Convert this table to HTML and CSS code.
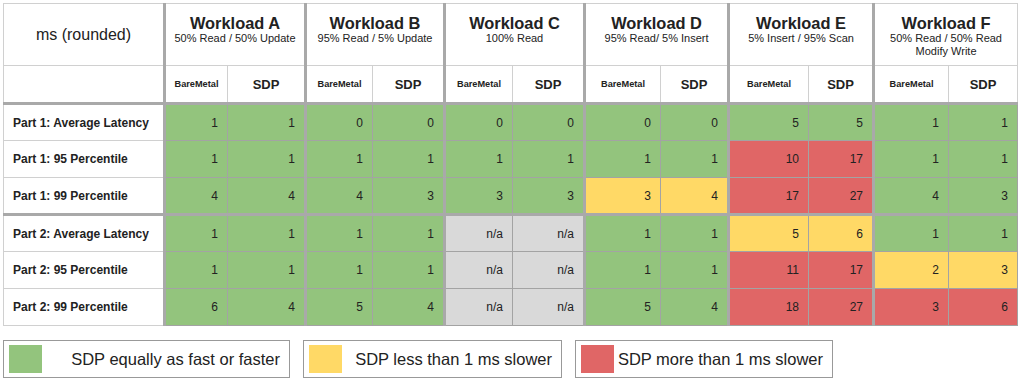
FILE: index.html
```html
<!DOCTYPE html>
<html>
<head>
<meta charset="utf-8">
<link rel="stylesheet" href="styles.css">
</head>
<body>
<div class="page">
<table class="grid">
  <colgroup>
    <col class="c0">
    <col class="a1"><col class="a2">
    <col class="b1"><col class="b2">
    <col class="c1"><col class="c2">
    <col class="d1"><col class="d2">
    <col class="e1"><col class="e2">
    <col class="f1"><col class="f2">
  </colgroup>
  <thead>
    <tr class="h1">
      <th class="corner">ms (rounded)</th>
      <th colspan="2" class="wl"><div class="title">Workload A</div><div class="sub">50% Read / 50% Update</div></th>
      <th colspan="2" class="wl"><div class="title">Workload B</div><div class="sub">95% Read / 5% Update</div></th>
      <th colspan="2" class="wl"><div class="title">Workload C</div><div class="sub">100% Read</div></th>
      <th colspan="2" class="wl"><div class="title">Workload D</div><div class="sub">95% Read/ 5% Insert</div></th>
      <th colspan="2" class="wl"><div class="title">Workload E</div><div class="sub">5% Insert / 95% Scan</div></th>
      <th colspan="2" class="wl"><div class="title">Workload F</div><div class="sub">50% Read / 50% Read<br>Modify Write</div></th>
    </tr>
    <tr class="h2">
      <th class="blank"></th>
      <th class="bm wl">BareMetal</th><th class="sdp">SDP</th>
      <th class="bm wl">BareMetal</th><th class="sdp">SDP</th>
      <th class="bm wl">BareMetal</th><th class="sdp">SDP</th>
      <th class="bm wl">BareMetal</th><th class="sdp">SDP</th>
      <th class="bm wl">BareMetal</th><th class="sdp">SDP</th>
      <th class="bm wl">BareMetal</th><th class="sdp">SDP</th>
    </tr>
  </thead>
  <tbody class="part">
    <tr>
      <th class="label">Part 1: Average Latency</th>
      <td class="g wl">1</td><td class="g">1</td>
      <td class="g wl">0</td><td class="g">0</td>
      <td class="g wl">0</td><td class="g">0</td>
      <td class="g wl">0</td><td class="g">0</td>
      <td class="g wl">5</td><td class="g">5</td>
      <td class="g wl">1</td><td class="g">1</td>
    </tr>
    <tr>
      <th class="label">Part 1: 95 Percentile</th>
      <td class="g wl">1</td><td class="g">1</td>
      <td class="g wl">1</td><td class="g">1</td>
      <td class="g wl">1</td><td class="g">1</td>
      <td class="g wl">1</td><td class="g">1</td>
      <td class="r wl">10</td><td class="r">17</td>
      <td class="g wl">1</td><td class="g">1</td>
    </tr>
    <tr>
      <th class="label">Part 1: 99 Percentile</th>
      <td class="g wl">4</td><td class="g">4</td>
      <td class="g wl">4</td><td class="g">3</td>
      <td class="g wl">3</td><td class="g">3</td>
      <td class="y wl">3</td><td class="y">4</td>
      <td class="r wl">17</td><td class="r">27</td>
      <td class="g wl">4</td><td class="g">3</td>
    </tr>
  </tbody>
  <tbody class="part">
    <tr>
      <th class="label">Part 2: Average Latency</th>
      <td class="g wl">1</td><td class="g">1</td>
      <td class="g wl">1</td><td class="g">1</td>
      <td class="n wl">n/a</td><td class="n">n/a</td>
      <td class="g wl">1</td><td class="g">1</td>
      <td class="y wl">5</td><td class="y">6</td>
      <td class="g wl">1</td><td class="g">1</td>
    </tr>
    <tr>
      <th class="label">Part 2: 95 Percentile</th>
      <td class="g wl">1</td><td class="g">1</td>
      <td class="g wl">1</td><td class="g">1</td>
      <td class="n wl">n/a</td><td class="n">n/a</td>
      <td class="g wl">1</td><td class="g">1</td>
      <td class="r wl">11</td><td class="r">17</td>
      <td class="y wl">2</td><td class="y">3</td>
    </tr>
    <tr>
      <th class="label">Part 2: 99 Percentile</th>
      <td class="g wl">6</td><td class="g">4</td>
      <td class="g wl">5</td><td class="g">4</td>
      <td class="n wl">n/a</td><td class="n">n/a</td>
      <td class="g wl">5</td><td class="g">4</td>
      <td class="r wl">18</td><td class="r">27</td>
      <td class="r wl">3</td><td class="r">6</td>
    </tr>
  </tbody>
</table>

<div class="legend">
  <div class="item item-g"><span class="swatch sw-g"></span><span class="ltext">SDP equally as fast or faster</span></div>
  <div class="item item-y"><span class="swatch sw-y"></span><span class="ltext">SDP less than 1 ms slower</span></div>
  <div class="item item-r"><span class="swatch sw-r"></span><span class="ltext">SDP more than 1 ms slower</span></div>
</div>
</div>
</body>
</html>
```

FILE: styles.css
```css
html, body {
  margin: 0;
  padding: 0;
  background: #ffffff;
}

body {
  font-family: "Liberation Sans", Arial, sans-serif;
  color: #222222;
}

.page {
  padding: 3px 0 0 3px;
}

.grid {
  border-collapse: collapse;
  table-layout: fixed;
  width: 1014px;
  border: 1px solid #d0d0d0;
}

.c0 { width: 161px; }
.a1 { width: 63px; }
.a2 { width: 78px; }
.b1 { width: 67px; }
.b2 { width: 72px; }
.c1 { width: 68px; }
.c2 { width: 72px; }
.d1 { width: 76px; }
.d2 { width: 68px; }
.e1 { width: 80px; }
.e2 { width: 65px; }
.f1 { width: 75px; }
.f2 { width: 69px; }

.grid th,
.grid td {
  border: 1px solid #d0d0d0;
  padding: 0;
}

.grid .wl {
  border-left: 3px solid #a9a9a9;
}

.h1 th {
  height: 61px;
  vertical-align: top;
  text-align: center;
}

.h1 .corner {
  vertical-align: middle;
  font-size: 16px;
  font-weight: normal;
  padding-bottom: 0;
}

.title {
  font-size: 16.4px;
  font-weight: bold;
  line-height: 18px;
  padding-top: 10px;
}

.sub {
  font-size: 11px;
  font-weight: normal;
  line-height: 12.6px;
  margin-top: 0;
}

.h2 th {
  height: 36px;
  font-weight: bold;
  text-align: center;
  vertical-align: middle;
  border-bottom: 3px solid #a9a9a9;
}

.h2 .bm {
  font-size: 9.2px;
}

.h2 .sdp {
  font-size: 13px;
}

.part {
  border-top: 3px solid #a9a9a9;
}

.part tr {
  height: 37px;
}

.part .label {
  text-align: left;
  font-size: 12px;
  font-weight: bold;
  padding-left: 9px;
  vertical-align: middle;
  border-right: 3px solid #a9a9a9;
}

.part td {
  text-align: right;
  font-size: 12px;
  padding-right: 9px;
  vertical-align: middle;
  border-color: #a3a3a3;
}

.part td.wl {
  border-left: 3px solid #a9a9a9;
}

.part tr:first-child td,
.part tr:first-child th {
  border-top: 3px solid #a9a9a9;
}

.g { background: #93c47d; }
.y { background: #ffd966; }
.r { background: #e06666; }
.n { background: #d9d9d9; }

.legend {
  display: flex;
  gap: 13px;
  margin-top: 14px;
}

.item {
  box-sizing: border-box;
  height: 38px;
  border: 1px solid #999999;
  display: flex;
  align-items: center;
  justify-content: space-between;
  padding: 0 9px 0 5px;
  font-size: 16.5px;
  color: #222222;
}

.item-g { width: 287px; }
.item-y { width: 259px; }
.item-r { width: 258px; }

.swatch {
  width: 33px;
  height: 28px;
  flex: none;
}

.sw-g { background: #93c47d; }
.sw-y { background: #ffd966; }
.sw-r { background: #e06666; }
```
